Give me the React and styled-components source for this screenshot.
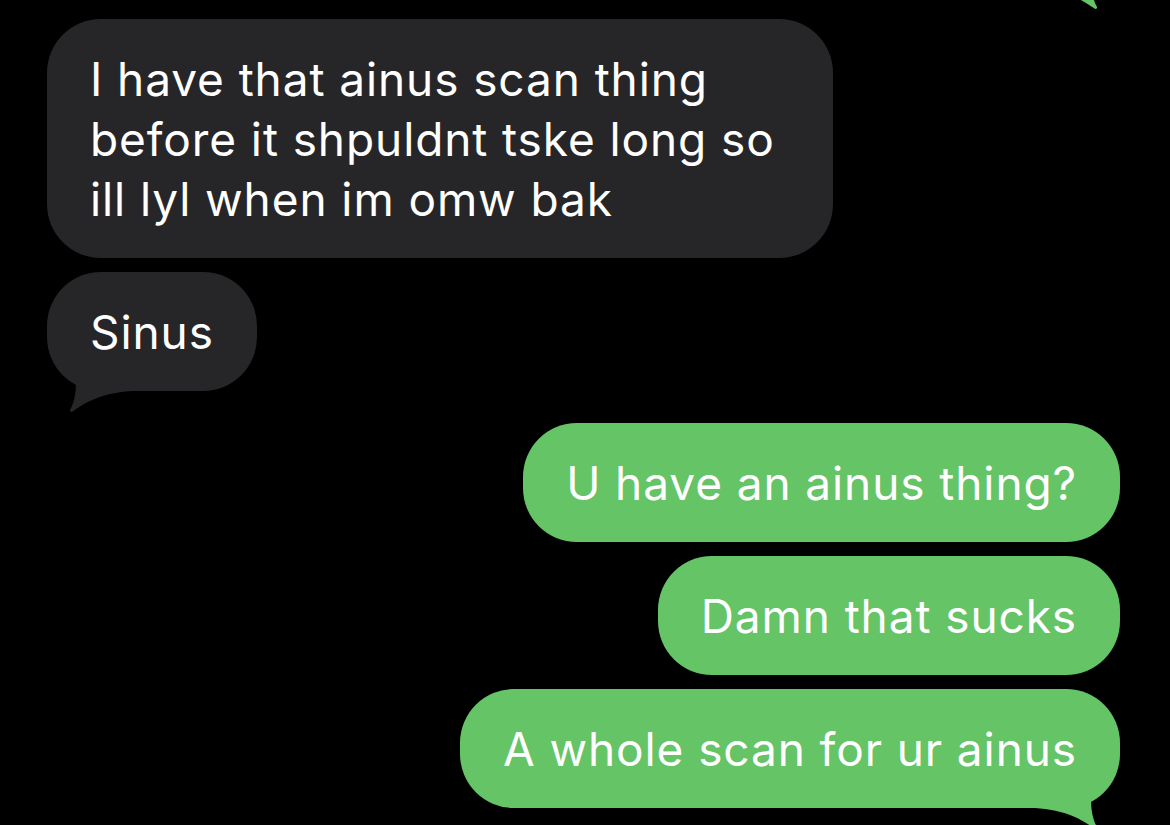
import React from "react";
import styled, { createGlobalStyle } from "styled-components";

const GRAY = "#262628";
const GREEN = "#65c466";

const Global = createGlobalStyle`
  html, body { margin: 0; padding: 0; background: #000; }
  body { width: 1170px; height: 825px; overflow: hidden; }
  * { box-sizing: border-box; }
`;

const Screen = styled.div`
  position: relative;
  width: 1170px;
  height: 825px;
  background: #000;
  overflow: hidden;
  display: flex;
  flex-direction: column;
  padding: 19px 50px 0 47px;
  font-family: Inter, "Noto Sans", sans-serif;
`;

const Row = styled.div`
  display: flex;
  justify-content: ${(p) => (p.$me ? "flex-end" : "flex-start")};
  margin-top: ${(p) => p.$gap || 0}px;
`;

const Bubble = styled.div`
  position: relative;
  width: ${(p) => p.$width || "fit-content"};
  padding: 30px 43px 29px 43px;
  border-radius: 54px;
  background: ${(p) => (p.$me ? GREEN : GRAY)};
  color: #fff;
  font-size: 46px;
  line-height: 60px;
  letter-spacing: 0.9px;
  white-space: nowrap;
`;

const Tail = styled.svg`
  position: absolute;
  bottom: -22px;
  ${(p) => (p.$me ? "right: 0; transform: scaleX(-1);" : "left: 0;")}
  width: 85px;
  height: 52px;
  fill: ${(p) => (p.$me ? GREEN : GRAY)};
`;

const TopTail = styled.svg`
  position: absolute;
  top: -42px;
  right: 50px;
  width: 85px;
  height: 52px;
  fill: ${GREEN};
  transform: scaleX(-1);
`;

const TAIL_PATH =
  "M 20 0 L 29 20 C 29 33 27 42 23 49 C 22.5 50.5 24 51.5 25.5 50.5 C 34 45 50 32 85 30 L 85 0 Z";

function BubbleTail({ me }) {
  return (
    <Tail $me={me} viewBox="0 0 85 52">
      <path d={TAIL_PATH} />
    </Tail>
  );
}

export default function App() {
  return (
    <>
      <Global />
      <Screen>
        <TopTail viewBox="0 0 85 52">
          <path d={TAIL_PATH} />
        </TopTail>
        <Row>
          <Bubble $width="786px">
            I have that ainus scan thing
            <br />
            before it shpuldnt tske long so
            <br />
            ill lyl when im omw bak
          </Bubble>
        </Row>
        <Row $gap={14}>
          <Bubble>
            Sinus
            <BubbleTail />
          </Bubble>
        </Row>
        <Row $me $gap={32}>
          <Bubble $me>U have an ainus thing?</Bubble>
        </Row>
        <Row $me $gap={14}>
          <Bubble $me>Damn that sucks</Bubble>
        </Row>
        <Row $me $gap={14}>
          <Bubble $me>
            A whole scan for ur ainus
            <BubbleTail me />
          </Bubble>
        </Row>
      </Screen>
    </>
  );
}
